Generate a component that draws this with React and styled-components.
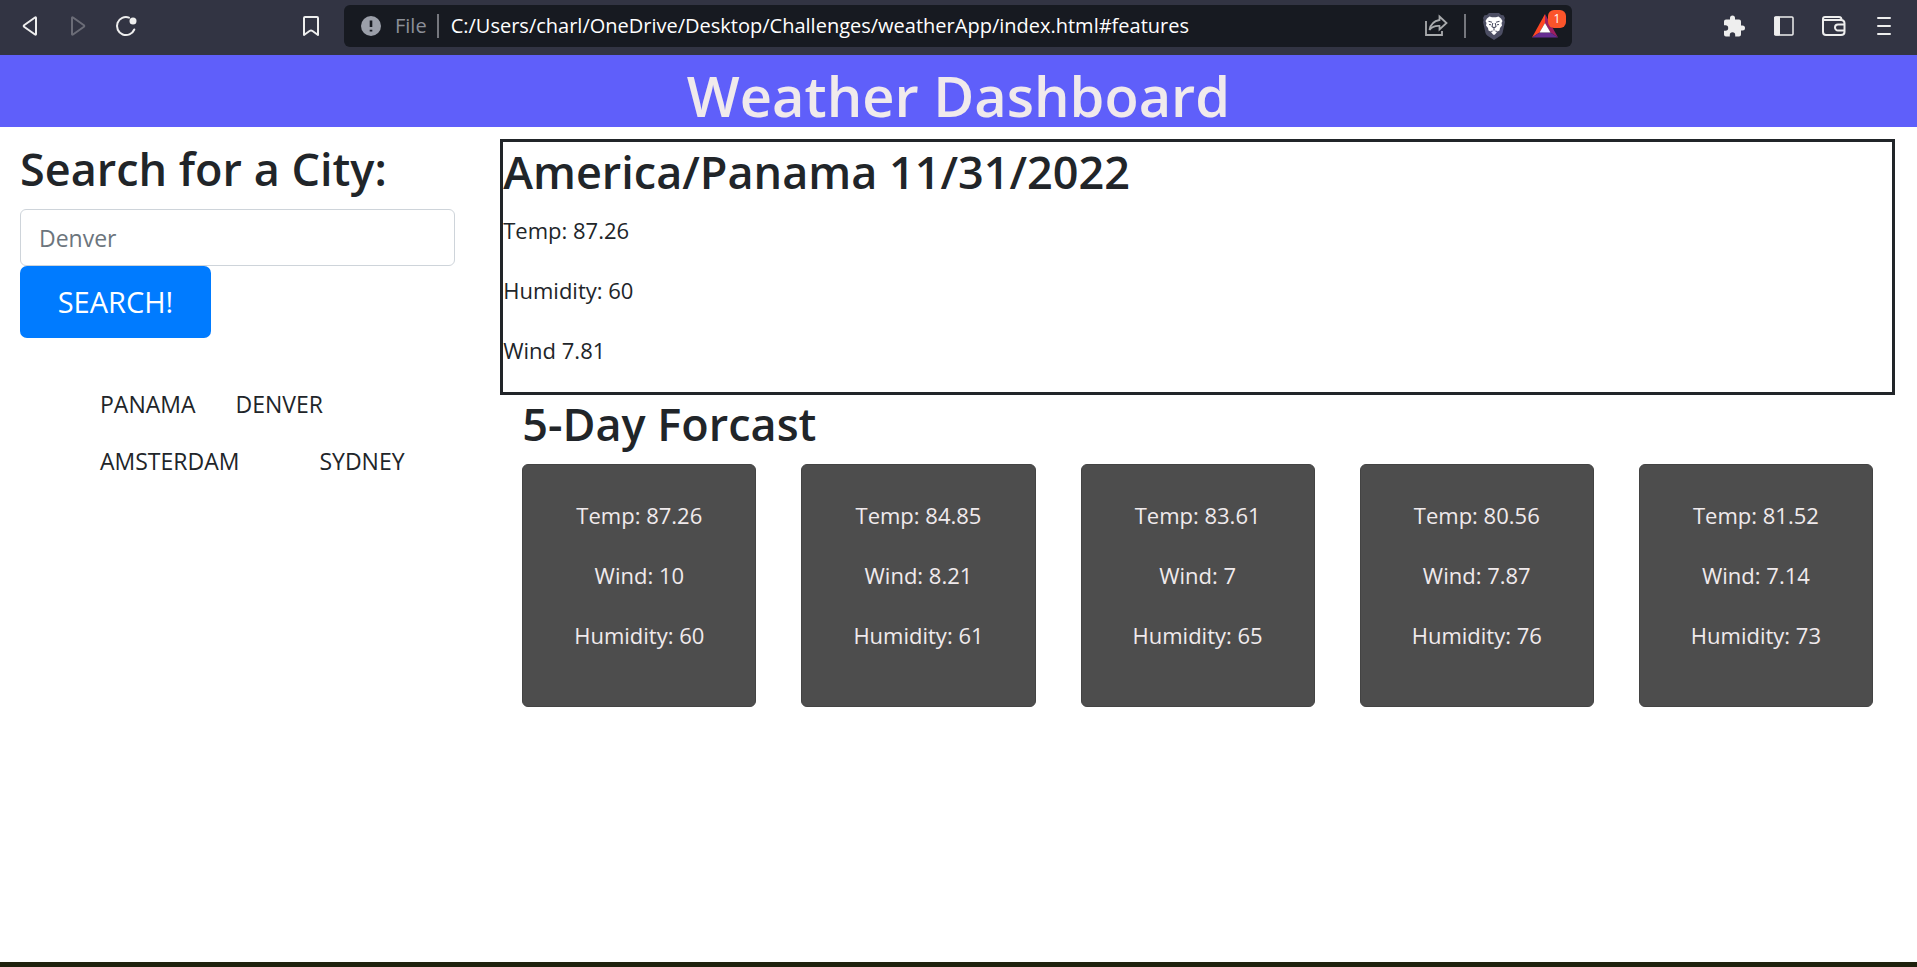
import React from "react";
import styled, { createGlobalStyle } from "styled-components";

const GlobalStyle = createGlobalStyle`
  *, *::before, *::after { box-sizing: border-box; }
  body {
    margin: 0;
    background: #fff;
    color: #212529;
    font-family: "Open Sans", "Noto Sans", sans-serif;
    font-size: 22px;
    line-height: 36px;
  }
  h1, h2, p, ul { margin: 0; padding: 0; font-weight: inherit; }
  button, input { font: inherit; }
`;

const Page = styled.div`
  min-height: 100vh;
  display: flex;
  flex-direction: column;
`;

const Toolbar = styled.nav`
  height: 55px;
  padding: 5px 20px 8px 18px;
  display: flex;
  align-items: center;
  background: #323443;
  color: #eee;
`;

const IconButton = styled.button`
  width: ${(p) => p.$width || 24}px;
  height: 24px;
  padding: 0;
  border: 0;
  background: none;
  color: inherit;
  display: flex;
  justify-content: center;
  align-items: center;
  opacity: ${(p) => (p.disabled ? 0.3 : 1)};
  svg { display: block; flex: none; overflow: visible; }
`;

const NavGroup = styled.div`
  display: flex;
  gap: 24px;
`;

const BookmarkSlot = styled.div`
  margin-left: 161px;
  margin-right: 21px;
`;

const AddressBar = styled.div`
  flex: 1;
  height: 42px;
  padding: 0 4px 0 17px;
  display: flex;
  align-items: center;
  border-radius: 6px;
  background: #171a21;
  font-size: 20px;
  line-height: 24px;
`;

const Scheme = styled.label`
  margin: 0 10px 0 14px;
  color: #8b8f98;
`;

const Divider = styled.span`
  width: 2px;
  height: 24px;
  background: #75777d;
`;

const AddressInput = styled.input`
  flex: 1;
  min-width: 0;
  padding: 0 12px;
  border: 0;
  outline: 0;
  background: none;
  color: #fff;
`;

const AddressActions = styled.div`
  display: flex;
  align-items: center;
  gap: 16px;
`;

const RewardSlot = styled.div`
  position: relative;
  margin-left: 10px;
  padding-right: 10px;
`;

const Badge = styled.span`
  position: absolute;
  top: -4px;
  right: 2px;
  width: 18px;
  height: 18px;
  border-radius: 6px;
  background: #fb542b;
  color: #fff;
  font-size: 12px;
  line-height: 18px;
  text-align: center;
`;

const ToolGroup = styled.div`
  margin-left: 149px;
  display: flex;
  gap: 24px;
`;

const Banner = styled.header`
  height: 72px;
  background: #5f5ffa;
  color: #f0eaec;
`;

const Title = styled.h1`
  && { font-weight: 600; }
  font-size: 56px;
  line-height: 80px;
  text-align: center;
`;

const Content = styled.div`
  flex: 1;
  display: flex;
  align-items: flex-start;
`;

const Sidebar = styled.aside`
  width: 25%;
  padding: 13px 24px 0 20px;
`;

const Heading = styled.h2`
  && { font-weight: 600; }
  display: block;
  margin-bottom: 11px;
  font-size: 45px;
  line-height: 58px;
`;

const CityInput = styled.input`
  display: block;
  width: 100%;
  height: 57px;
  padding: 0 18px;
  border: 1px solid #ced4da;
  border-radius: 6px;
  color: #495057;
  font-size: 23px;
  &::placeholder { color: #6c757d; opacity: 1; }
`;

const SearchButton = styled.button`
  width: 191px;
  height: 72px;
  padding: 0;
  border: 0;
  border-radius: 7px;
  background: #007bff;
  color: #fff;
  font-size: 29px;
`;

const Cities = styled.div`
  padding: 48px 0 0 80px;
  font-size: 23px;
`;

const CityRow = styled.ul`
  height: 57px;
  display: flex;
  gap: ${(p) => (p.$wide ? 80 : 40)}px;
  list-style: none;
`;

const Main = styled.main`
  width: 75%;
  padding: 12px 22px 0 21px;
`;

const Current = styled.section`
  padding-top: 1px;
  border: 3px solid #212529;
`;

const Reading = styled.p`
  margin-bottom: 24px;
`;

const Forecast = styled.section`
  padding: 0 22px;
`;

const Days = styled.div`
  display: grid;
  grid-template-columns: repeat(5, 1fr);
  gap: 45px;
`;

const DayCard = styled.article`
  height: 243px;
  padding-top: 32px;
  border: 1px solid #434343;
  border-radius: 6px;
  background: #4d4d4d;
  color: #f0eaec;
  text-align: center;
`;

const Desktop = styled.footer`
  height: 5px;
  background: #1f210d;
`;

const stroke = { fill: "none", stroke: "currentColor", strokeWidth: 2, strokeLinejoin: "round", strokeLinecap: "round" };

const BackIcon = () => (
  <svg width="16" height="22" viewBox="0 0 16 22" {...stroke}>
    <path d="M14 3v16q0 1.2-1 .5L2.4 12Q1 11 2.4 10L13 2.500Q14 1.800 14 3z" />
  </svg>
);
const ForwardIcon = () => (
  <svg width="16" height="22" viewBox="0 0 16 22" {...stroke}>
    <path d="M2 3v16q0 1.200 1 .5L13.600 12Q15 11 13.600 10L3 2.500Q2 1.800 2 3z" />
  </svg>
);
const ReloadIcon = () => (
  <svg width="22" height="22" viewBox="0 0 22 22" {...stroke}>
    <path d="M14 2.600A9 9 0 1 0 19.300 14.500" />
    <circle cx="18" cy="6" r="3.500" fill="currentColor" stroke="none" />
  </svg>
);
const BookmarkIcon = () => (
  <svg width="16" height="20" viewBox="0 0 16 20" {...stroke}>
    <path d="M1 2q0-1 1-1h12q1 0 1 1v17l-5.500-4q-1.500-1-3 0L1 19z" />
  </svg>
);
const InfoIcon = () => (
  <svg width="20" height="20" viewBox="0 0 20 20">
    <circle cx="10" cy="10" r="10" fill="#9b9fa9" />
    <path d="M10 4.500v6.500M10 13.800v1.700" stroke="#171a21" strokeWidth="2.600" />
  </svg>
);
const ShareIcon = () => (
  <svg width="24" height="22" viewBox="0 0 24 22" fill="none" stroke="#a9abad" strokeWidth="1.800">
    <path d="M2 6v14h16v-4" />
    <path d="M15.500 1.500 22.500 8l-7 6.500V11Q9 10.500 5.500 15 7 6.500 15.500 5z" />
  </svg>
);
const LionIcon = () => (
  <svg width="24" height="28" viewBox="0 0 24 28">
    <path d="M7 1h10l2 2 2.500.3L23 6l-.6 2L23 10l-2.500 11q-.5 1.500-2 2.800L12 28l-6.500-4.200q-1.500-1.300-2-2.800L1 10l.6-2L1 6l1.500-2.700L5 3z" fill="#4c4e63" />
    <path d="M7.500 4.500 10 5.200h4l2.500-.7 2.500 2 1.500 2.500-1 2 .5 2.500-2 2.500-.5 2.500-2 1-1.500-1-2 1-2-1-1.500 1-2-1-.5-2.500-2-2.500.5-2.500-1-2L5 6.500z" fill="#fff" />
    <path d="M9 20l3-1.300 3 1.300-1.800 2.200L12 23l-1.200-.8z" fill="#fff" />
    <path d="M6.500 9.200l3.500 1M17.500 9.200l-3.500 1M10.800 11l-.8 3.500 2 1.500 2-1.500-.8-3.500M12 16v2.500M7 12.500l2 .3M17 12.500l-2 .3" fill="none" stroke="#4c4e63" strokeWidth="1.100" />
  </svg>
);
const BatIcon = () => (
  <svg width="26" height="24" viewBox="0 0 26 24">
    <path d="M13 0v9L7.500 18.500 0 23.500z" fill="#ff4724" />
    <path d="M13 0l13 23.500-7.500-5L13 9z" fill="#9e1f63" />
    <path d="M0 23.500l7.500-5h11l7.500 5z" fill="#662d91" />
    <path d="M13 9l5.500 9.500h-11z" fill="#fff" />
  </svg>
);
const PuzzleIcon = () => (
  <svg width="22" height="22" viewBox="0 0 22 22" fill="currentColor">
    <path d="M19.500 10.500H18V6.500a2 2 0 0 0-2-2h-4V3a2.500 2.500 0 0 0-5 0v1.500H3a2 2 0 0 0-2 2v3.800h1.500a2.700 2.700 0 0 1 0 5.400H1v3.800a2 2 0 0 0 2 2h3.800V20a2.700 2.700 0 0 1 5.400 0v1.500H16a2 2 0 0 0 2-2v-4h1.500a2.500 2.500 0 0 0 0-5z" />
  </svg>
);
const PanelIcon = () => (
  <svg width="20" height="20" viewBox="0 0 20 20" {...stroke} strokeWidth="1.500">
    <rect x="1" y="1" width="18" height="18" rx="1" />
    <path d="M1 1h4.500v18H1z" fill="currentColor" strokeWidth="1" />
  </svg>
);
const WalletIcon = () => (
  <svg width="24" height="20" viewBox="0 0 24 20" {...stroke}>
    <path d="M19.500 4Q19.500 1 17 1H3Q1 1 1 3v13q0 3 3 3h15q3.500 0 3.500-3V7.500q0-3.500-3.500-3.500H2M22.500 8.500H16a2.800 2.800 0 0 0 0 6h6.500" />
  </svg>
);
const MenuIcon = () => (
  <svg width="14" height="20" viewBox="0 0 14 20" {...stroke}>
    <path d="M1 2h12M1 10h12M1 18h12" />
  </svg>
);

const days = [
  { temp: "87.26", wind: "10", humidity: 60 },
  { temp: "84.85", wind: "8.21", humidity: 61 },
  { temp: "83.61", wind: "7", humidity: 65 },
  { temp: "80.56", wind: "7.87", humidity: 76 },
  { temp: "81.52", wind: "7.14", humidity: 73 },
];

export default function App() {
  return (
    <Page>
      <GlobalStyle />
      <Toolbar aria-label="Browser">
        <NavGroup>
          <IconButton aria-label="Back"><BackIcon /></IconButton>
          <IconButton aria-label="Forward" disabled><ForwardIcon /></IconButton>
          <IconButton aria-label="Reload"><ReloadIcon /></IconButton>
        </NavGroup>
        <BookmarkSlot>
          <IconButton aria-label="Bookmark"><BookmarkIcon /></IconButton>
        </BookmarkSlot>
        <AddressBar>
          <InfoIcon />
          <Scheme htmlFor="address">File</Scheme>
          <Divider />
          <AddressInput id="address" defaultValue="C:/Users/charl/OneDrive/Desktop/Challenges/weatherApp/index.html#features" />
          <AddressActions>
            <IconButton aria-label="Share"><ShareIcon /></IconButton>
            <Divider />
            <IconButton aria-label="Shields"><LionIcon /></IconButton>
            <RewardSlot>
              <IconButton $width={26} aria-label="Rewards"><BatIcon /></IconButton>
              <Badge>1</Badge>
            </RewardSlot>
          </AddressActions>
        </AddressBar>
        <ToolGroup>
          <IconButton $width={26} aria-label="Extensions"><PuzzleIcon /></IconButton>
          <IconButton $width={26} aria-label="Side panel"><PanelIcon /></IconButton>
          <IconButton $width={26} aria-label="Wallet"><WalletIcon /></IconButton>
          <IconButton $width={26} aria-label="Menu"><MenuIcon /></IconButton>
        </ToolGroup>
      </Toolbar>
      <Banner>
        <Title>Weather Dashboard</Title>
      </Banner>
      <Content>
        <Sidebar>
          <Heading as="label" htmlFor="city">Search for a City:</Heading>
          <CityInput id="city" placeholder="Denver" />
          <SearchButton>SEARCH!</SearchButton>
          <Cities>
            <CityRow>
              <li>PANAMA</li>
              <li>DENVER</li>
            </CityRow>
            <CityRow $wide>
              <li>AMSTERDAM</li>
              <li>SYDNEY</li>
            </CityRow>
          </Cities>
        </Sidebar>
        <Main>
          <Current>
            <Heading>America/Panama 11/31/2022</Heading>
            <Reading>Temp: 87.26</Reading>
            <Reading>Humidity: 60</Reading>
            <Reading>Wind 7.81</Reading>
          </Current>
          <Forecast>
            <Heading>5-Day Forcast</Heading>
            <Days>
              {days.map((day) => (
                <DayCard key={day.temp}>
                  <Reading>Temp: {day.temp}</Reading>
                  <Reading>Wind: {day.wind}</Reading>
                  <Reading>Humidity: {day.humidity}</Reading>
                </DayCard>
              ))}
            </Days>
          </Forecast>
        </Main>
      </Content>
      <Desktop />
    </Page>
  );
}
